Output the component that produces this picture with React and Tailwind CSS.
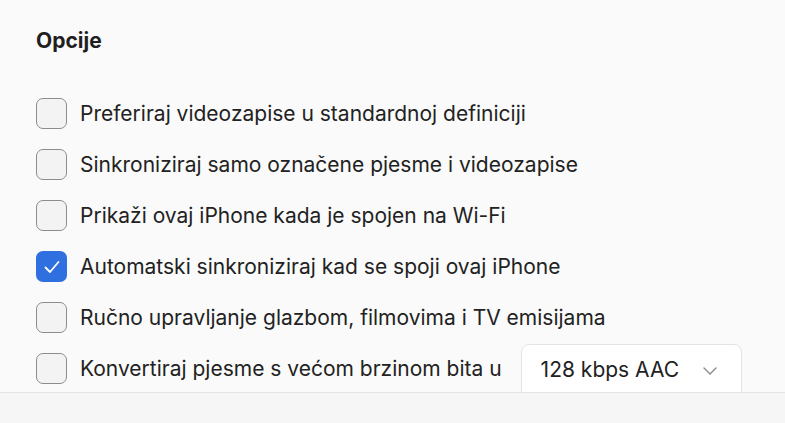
import React from "react";

const options = [
  { label: "Preferiraj videozapise u standardnoj definiciji", checked: false },
  { label: "Sinkroniziraj samo označene pjesme i videozapise", checked: false },
  { label: "Prikaži ovaj iPhone kada je spojen na Wi-Fi", checked: false },
  { label: "Automatski sinkroniziraj kad se spoji ovaj iPhone", checked: true },
  { label: "Ručno upravljanje glazbom, filmovima i TV emisijama", checked: false },
];

const Box = ({ checked }) =>
  checked ? (
    <div className="w-[31px] h-[31px] rounded-[7px] bg-[#2f6fdf] flex items-center justify-center shrink-0">
      <svg width="18" height="14" viewBox="0 0 18 14" fill="none">
        <path d="M2.5 7.5l4.5 4.5 8.5-10" stroke="#fff" strokeWidth="1.8" strokeLinecap="round" strokeLinejoin="round" />
      </svg>
    </div>
  ) : (
    <div className="w-[31px] h-[31px] rounded-[7px] bg-[#f3f3f3] border-[1.5px] border-[#8c8c8c] shrink-0" />
  );

export default function App() {
  return (
    <div
      className="w-[785px] h-[423px] bg-[#f6f6f6] text-[#222]"
      style={{ fontFamily: "Inter, 'Noto Sans', sans-serif" }}
    >
      <div className="h-[393px] bg-[#fafafa] border-b border-[#e4e4e4] overflow-hidden px-9 pt-[28px]">
        <h2 className="text-[21px] leading-[26px] font-bold text-[#1f1f1f]">Opcije</h2>
        <div className="mt-[34px] flex flex-col">
          {options.map((o) => (
            <div key={o.label} className="h-[51px] flex items-center gap-[13px]">
              <Box checked={o.checked} />
              <span className="text-[21px]">{o.label}</span>
            </div>
          ))}
          <div className="h-[51px] flex items-center gap-[13px]">
            <Box checked={false} />
            <span className="text-[21px]">Konvertiraj pjesme s većom brzinom bita u</span>
            <div className="ml-[6px] mt-[48px] w-[221px] h-[98px] shrink-0 bg-white border border-[#e3e3e3] rounded-[8px] flex items-start justify-between pl-[19px] pr-[24px] pt-[10px]">
              <span className="text-[21px] leading-[30px]">128 kbps AAC</span>
              <svg width="14" height="8" viewBox="0 0 14 8" fill="none" className="mt-[12px]">
                <path d="M1 1l6 6 6-6" stroke="#8a8a8a" strokeWidth="1.4" strokeLinecap="round" strokeLinejoin="round" />
              </svg>
            </div>
          </div>
        </div>
      </div>
    </div>
  );
}
